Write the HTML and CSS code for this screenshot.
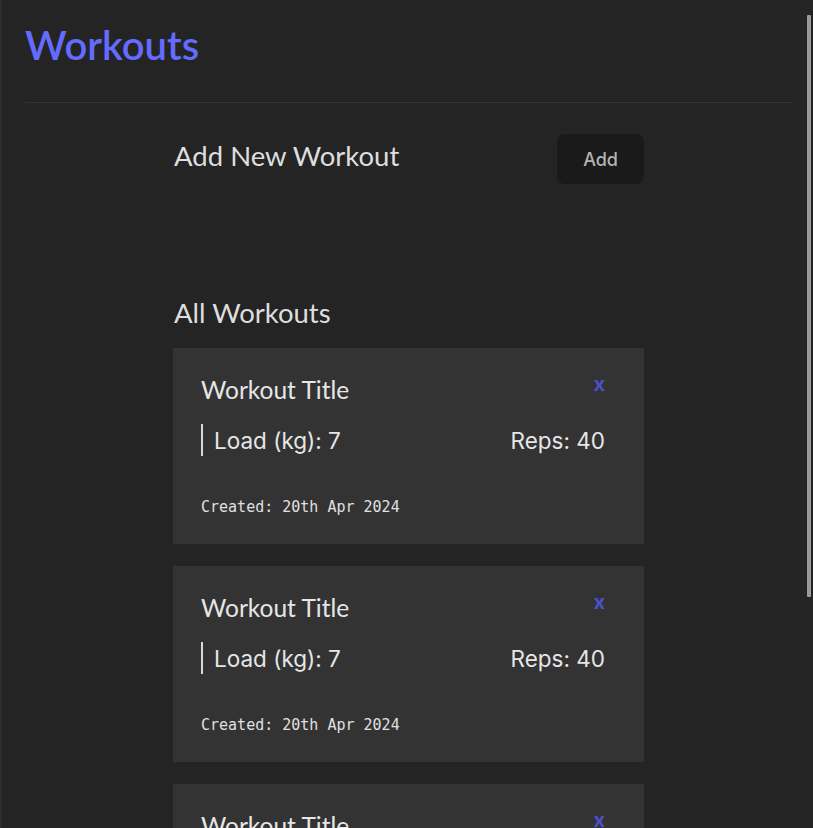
FILE: index.html
```html
<!DOCTYPE html>
<html lang="en">
<head>
<meta charset="utf-8">
<title>Workouts</title>
<link rel="stylesheet" href="styles.css">
</head>
<body>
<div class="app">
  <header class="topbar">
    <h1 class="brand">Workouts</h1>
  </header>
  <hr class="divider">
  <main class="content">
    <section class="add-row">
      <h3 class="add-title">Add New Workout</h3>
      <button class="add-btn">Add</button>
    </section>
    <h2 class="list-title">All Workouts</h2>
    <div class="cards">
      <article class="card">
        <div class="card-head">
          <h4 class="card-title">Workout Title</h4>
          <span class="card-del">x</span>
        </div>
        <div class="card-stats">
          <span>Load (kg): 7</span>
          <span>Reps: 40</span>
        </div>
        <p class="card-date">Created: 20th Apr 2024</p>
      </article>
      <article class="card">
        <div class="card-head">
          <h4 class="card-title">Workout Title</h4>
          <span class="card-del">x</span>
        </div>
        <div class="card-stats">
          <span>Load (kg): 7</span>
          <span>Reps: 40</span>
        </div>
        <p class="card-date">Created: 20th Apr 2024</p>
      </article>
      <article class="card">
        <div class="card-head">
          <h4 class="card-title">Workout Title</h4>
          <span class="card-del">x</span>
        </div>
        <div class="card-stats">
          <span>Load (kg): 7</span>
          <span>Reps: 40</span>
        </div>
        <p class="card-date">Created: 20th Apr 2024</p>
      </article>
    </div>
  </main>
  <div class="scrollbar"></div>
</div>
</body>
</html>
```

FILE: styles.css
```css
html, body {
  margin: 0;
  padding: 0;
  height: 100%;
  overflow: hidden;
}
body {
  background: #242424;
  color: rgba(255, 255, 255, 0.87);
  font-family: Inter, "Open Sans", sans-serif;
}
.app {
  position: relative;
  height: 100%;
  border-left: 2px solid #2c2c2c;
  box-sizing: border-box;
  overflow: hidden;
}
.topbar {
  padding: 21px 0 0 23px;
}
.brand {
  margin: 0;
  font-family: Lato, sans-serif;
  font-size: 40px;
  line-height: 48px;
  font-weight: 600;
  color: #646cff;
}
.divider {
  margin: 33px 21px 0 23px;
  border: 0;
  border-top: 1px solid #343434;
  height: 0;
}
.content {
  width: 471px;
  margin: 0 auto;
  padding-left: 2px;
}
.add-row {
  display: flex;
  justify-content: space-between;
  align-items: flex-start;
  margin-top: 31px;
}
.add-title {
  margin: 6px 0 0 1px;
  font-family: Lato, sans-serif;
  font-size: 27.5px;
  line-height: 32px;
  font-weight: 400;
  color: #dedede;
}
.add-btn {
  height: 50px;
  padding: 0 26px;
  border: 0;
  border-radius: 8px;
  background: #1a1a1a;
  color: #b4b4b4;
  font-family: Inter, sans-serif;
  font-size: 18px;
  font-weight: 500;
}
.list-title {
  margin: 113px 0 0 1px;
  font-family: Lato, sans-serif;
  font-size: 27.5px;
  line-height: 32px;
  font-weight: 400;
  color: #dedede;
}
.cards {
  display: flex;
  flex-direction: column;
  gap: 22px;
  margin-top: 19px;
}
.card {
  background: #333333;
  padding: 27px 39px 28px 28px;
  height: 196px;
  box-sizing: border-box;
}
.card-head {
  display: flex;
  justify-content: space-between;
  align-items: flex-start;
}
.card-title {
  margin: 0;
  font-family: Lato, sans-serif;
  font-size: 24.5px;
  line-height: 30px;
  font-weight: 400;
  color: #e6e6e6;
}
.card-del {
  font-family: Inter, sans-serif;
  font-weight: 700;
  font-size: 20px;
  line-height: 20px;
  color: #4d4fc8;
  margin-top: -1px;
}
.card-stats {
  display: flex;
  justify-content: space-between;
  align-items: center;
  margin-top: 19px;
  height: 32px;
  border-left: 2px solid #d9d9d9;
  padding-left: 11px;
  font-family: Inter, sans-serif;
  font-size: 22.5px;
  color: #e6e6e6;
}
.card-date {
  margin: 42px 0 0;
  font-family: "DejaVu Sans Mono", "Liberation Mono", monospace;
  font-size: 15px;
  line-height: 18px;
  color: #e0e0e0;
}
.scrollbar {
  position: absolute;
  top: 15px;
  right: 2px;
  width: 4px;
  height: 582px;
  background: #9a9a9a;
  border-radius: 1px;
}
```
